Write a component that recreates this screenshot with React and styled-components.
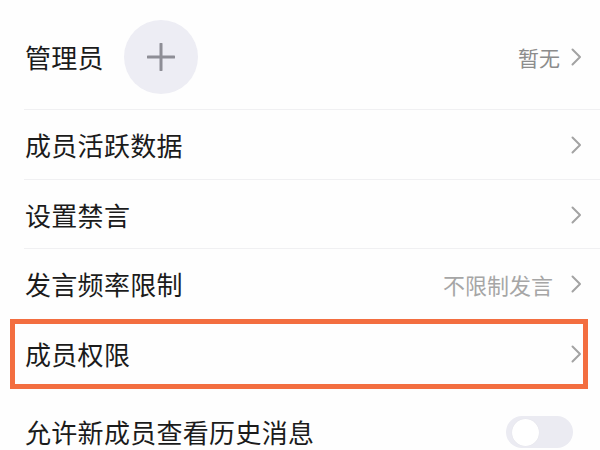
import React from "react";
import styled, { createGlobalStyle } from "styled-components";

const Global = createGlobalStyle`
  html, body { margin: 0; padding: 0; background: #fefefe; }
  body { font-family: "Noto Sans CJK SC", "Noto Sans", sans-serif; overflow: hidden; }
`;

const Page = styled.div`
  width: 600px;
  height: 450px;
  display: flex;
  flex-direction: column;
  background: #fefefe;
  overflow: hidden;
`;

const Row = styled.div`
  flex: none;
  height: ${(p) => p.$h || 70}px;
  box-sizing: border-box;
  display: flex;
  align-items: center;
  padding: ${(p) => p.$pad || "0 18px 0 25px"};
  position: relative;
  ${(p) =>
    p.$line
      ? `&::after { content: ""; position: absolute; left: 24px; right: 0; bottom: 0; height: 1px; background: #f0f0f2; }`
      : ""}
`;

const Highlight = styled.div`
  flex: none;
  margin-left: 10px;
  width: 578px;
  height: 70px;
  box-sizing: border-box;
  border: 5px solid #f36e40;
  display: flex;
  align-items: center;
  padding: 0 1px 0 10px;
`;

const Label = styled.span`
  font-size: 26px;
  color: #1b1b1b;
  line-height: 1;
  letter-spacing: 0.3px;
`;

const Spacer = styled.div`
  flex: 1;
`;

const Value = styled.span`
  font-size: ${(p) => (p.$light ? 22 : 21)}px;
  color: ${(p) => (p.$light ? "#a6a6a6" : "#8c8c8c")};
  line-height: 1;
  margin-right: ${(p) => (p.$light ? 18 : 11)}px;
`;

const AddCircle = styled.div`
  width: 74px;
  height: 74px;
  border-radius: 50%;
  background: #ededf4;
  margin-left: 20px;
  display: flex;
  align-items: center;
  justify-content: center;
`;

const Toggle = styled.div`
  width: 67px;
  height: 32px;
  border-radius: 16px;
  background: #ebebf2;
  display: flex;
  align-items: center;
  padding-left: 6px;
  box-sizing: border-box;
  margin-right: 9px;
`;

const Knob = styled.div`
  width: 27px;
  height: 27px;
  border-radius: 50%;
  background: #ffffff;
  box-shadow: 0 0 1px rgba(0,0,0,0.08);
`;

const Chevron = () => (
  <svg width="11" height="18" viewBox="0 0 11 18">
    <polyline points="1.5,1.5 9,9 1.5,16.5" fill="none" stroke="#a3a3a3" strokeWidth="2" strokeLinecap="round" strokeLinejoin="round" />
  </svg>
);

const Plus = () => (
  <svg width="28" height="28" viewBox="0 0 28 28">
    <line x1="14" y1="1" x2="14" y2="27" stroke="#8e8e96" strokeWidth="3" strokeLinecap="round" />
    <line x1="1" y1="14" x2="27" y2="14" stroke="#8e8e96" strokeWidth="3" strokeLinecap="round" />
  </svg>
);

export default function App() {
  return (
    <>
      <Global />
      <Page>
        <Row $h={110} $line $pad="4px 18px 0 25px">
          <Label>管理员</Label>
          <AddCircle>
            <Plus />
          </AddCircle>
          <Spacer />
          <Value>暂无</Value>
          <Chevron />
        </Row>
        <Row $line>
          <Label>成员活跃数据</Label>
          <Spacer />
          <Chevron />
        </Row>
        <Row $h={69} $line>
          <Label>设置禁言</Label>
          <Spacer />
          <Chevron />
        </Row>
        <Row>
          <Label>发言频率限制</Label>
          <Spacer />
          <Value $light>不限制发言</Value>
          <Chevron />
        </Row>
        <Highlight>
          <Label>成员权限</Label>
          <Spacer />
          <Chevron />
        </Highlight>
        <Row $h={86}>
          <Label>允许新成员查看历史消息</Label>
          <Spacer />
          <Toggle>
            <Knob />
          </Toggle>
        </Row>
      </Page>
    </>
  );
}
